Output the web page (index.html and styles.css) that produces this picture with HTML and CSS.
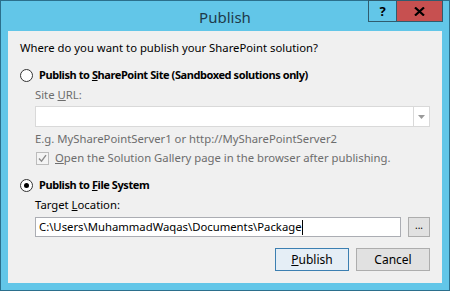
FILE: index.html
```html
<!DOCTYPE html>
<html lang="en">
<head>
    <meta charset="UTF-8">
    <title>Publish</title>
    <link rel="stylesheet" href="styles.css">
</head>
<body>
    <div class="window">
        <div class="titlebar">
            <span class="title">Publish</span>
            <div class="caption">
                <span class="cap-btn help">?</span>
                <span class="cap-btn close">
                    <svg width="11" height="9" viewBox="0 0 11 9"><path d="M1 0.5 L10 8.5 M10 0.5 L1 8.5" stroke="#000" stroke-width="2.2"/></svg>
                </span>
            </div>
        </div>
        <div class="client">
            <p class="prompt">Where do you want to publish your SharePoint solution?</p>

            <div class="option">
                <span class="radio"></span>
                <span>Publish to <u>S</u>harePoint Site (Sandboxed solutions only)</span>
            </div>
            <div class="group disabled">
                <div class="field-label">Site <u>U</u>RL:</div>
                <div class="combo">
                    <span class="combo-text"></span>
                    <span class="combo-arrow">
                        <svg width="7" height="4" viewBox="0 0 7 4"><path d="M0 0 H7 L3.5 4 Z" fill="#9a9a9a"/></svg>
                    </span>
                </div>
                <div class="hint">E.g. MySharePointServer1 or http://MySharePointServer2</div>
                <div class="check-row">
                    <span class="check">
                        <svg width="9" height="9" viewBox="0 0 9 9"><path d="M1 4.5 L3.5 7.2 L8 1.2" fill="none" stroke="#8a8a8a" stroke-width="1.4"/></svg>
                    </span>
                    <span><u>O</u>pen the Solution Gallery page in the browser after publishing.</span>
                </div>
            </div>

            <div class="option">
                <span class="radio checked"></span>
                <span>Publish to <u>F</u>ile System</span>
            </div>
            <div class="group">
                <div class="field-label">Target <u>L</u>ocation:</div>
                <div class="path-row">
                    <div class="textbox">C:\Users\MuhammadWaqas\Documents\Package<span class="caret"></span></div>
                    <button class="browse">...</button>
                </div>
            </div>

            <div class="actions">
                <button class="btn default"><u>P</u>ublish</button>
                <button class="btn">Cancel</button>
            </div>
        </div>
    </div>
</body>
</html>
```

FILE: styles.css
```css
body {
    margin: 0;
    font-family: "Noto Sans", "Open Sans", sans-serif;
    font-size: 11.3px;
    color: #000;
}
.window {
    width: 450px;
    height: 291px;
    box-sizing: border-box;
    border: 1px solid #2b6f8c;
    background: #62c6e8;
    display: flex;
    flex-direction: column;
}
.titlebar {
    position: relative;
    height: 30px;
    display: flex;
    align-items: center;
    justify-content: center;
}
.title {
    font-size: 15px;
    color: #1e3a4a;
    margin-top: 1px;
}
.caption {
    position: absolute;
    top: -1px;
    right: 6px;
    display: flex;
}
.cap-btn {
    height: 20px;
    display: flex;
    align-items: center;
    justify-content: center;
    border: 1px solid #2f5c6e;
    font-weight: bold;
    font-size: 13px;
}
.help {
    width: 27px;
}
.close {
    width: 45px;
    background: #c75050;
    border-left: none;
}
.client {
    flex: 1;
    margin: 0 7px 7px;
    background: #f0f0f0;
    padding: 0 12px;
    display: flex;
    flex-direction: column;
}
.prompt {
    margin: 9px 0 0;
    line-height: 16px;
}
.option {
    display: flex;
    align-items: center;
    gap: 6px;
    font-weight: bold;
    font-size: 11px;
    letter-spacing: -0.42px;
    line-height: 16px;
    margin-top: 11px;
}
.radio {
    width: 11px;
    height: 11px;
    border: 1px solid #333;
    border-radius: 50%;
    background: #fff;
    display: flex;
    align-items: center;
    justify-content: center;
}
.radio.checked::after {
    content: "";
    width: 5px;
    height: 5px;
    border-radius: 50%;
    background: #000;
}
.group {
    padding-left: 15px;
}
.disabled {
    color: #6d6d6d;
}
.field-label {
    line-height: 16px;
    margin-top: 4px;
}
.combo {
    margin-top: 3px;
    height: 19px;
    border: 1px solid #d9d9d9;
    background: #fff;
    display: flex;
}
.combo-text {
    flex: 1;
}
.combo-arrow {
    width: 15px;
    border-left: 1px solid #d9d9d9;
    display: flex;
    align-items: center;
    justify-content: center;
}
.hint {
    line-height: 16px;
    margin-top: 4px;
}
.check-row {
    display: flex;
    align-items: center;
    gap: 6px;
    line-height: 16px;
    margin-top: 3px;
}
.check {
    width: 11px;
    height: 11px;
    border: 1px solid #bcbcbc;
    background: #f4f4f4;
    display: flex;
    align-items: center;
    justify-content: center;
    margin-left: 1px;
}
.path-row {
    display: flex;
    gap: 7px;
    margin-top: 4px;
}
.textbox {
    flex: 1;
    height: 18px;
    border: 1px solid #abadb3;
    background: #fff;
    padding-left: 3px;
    line-height: 18px;
    display: flex;
    align-items: center;
}
.caret {
    width: 1px;
    height: 15px;
    background: #000;
}
.browse {
    width: 22px;
    height: 20px;
    border: 1px solid #adadad;
    background: #e1e1e1;
    font: inherit;
    font-size: 10px;
    padding: 0 0 4px;
}
.actions {
    display: flex;
    justify-content: flex-end;
    gap: 7px;
    margin-top: 11px;
}
.btn {
    width: 74px;
    height: 23px;
    border: 1px solid #adadad;
    background: #e1e1e1;
    font: inherit;
    font-size: 12px;
    padding: 0;
}
.btn.default {
    border-color: #3c7fb1;
    background: #e5eef6;
}
```
